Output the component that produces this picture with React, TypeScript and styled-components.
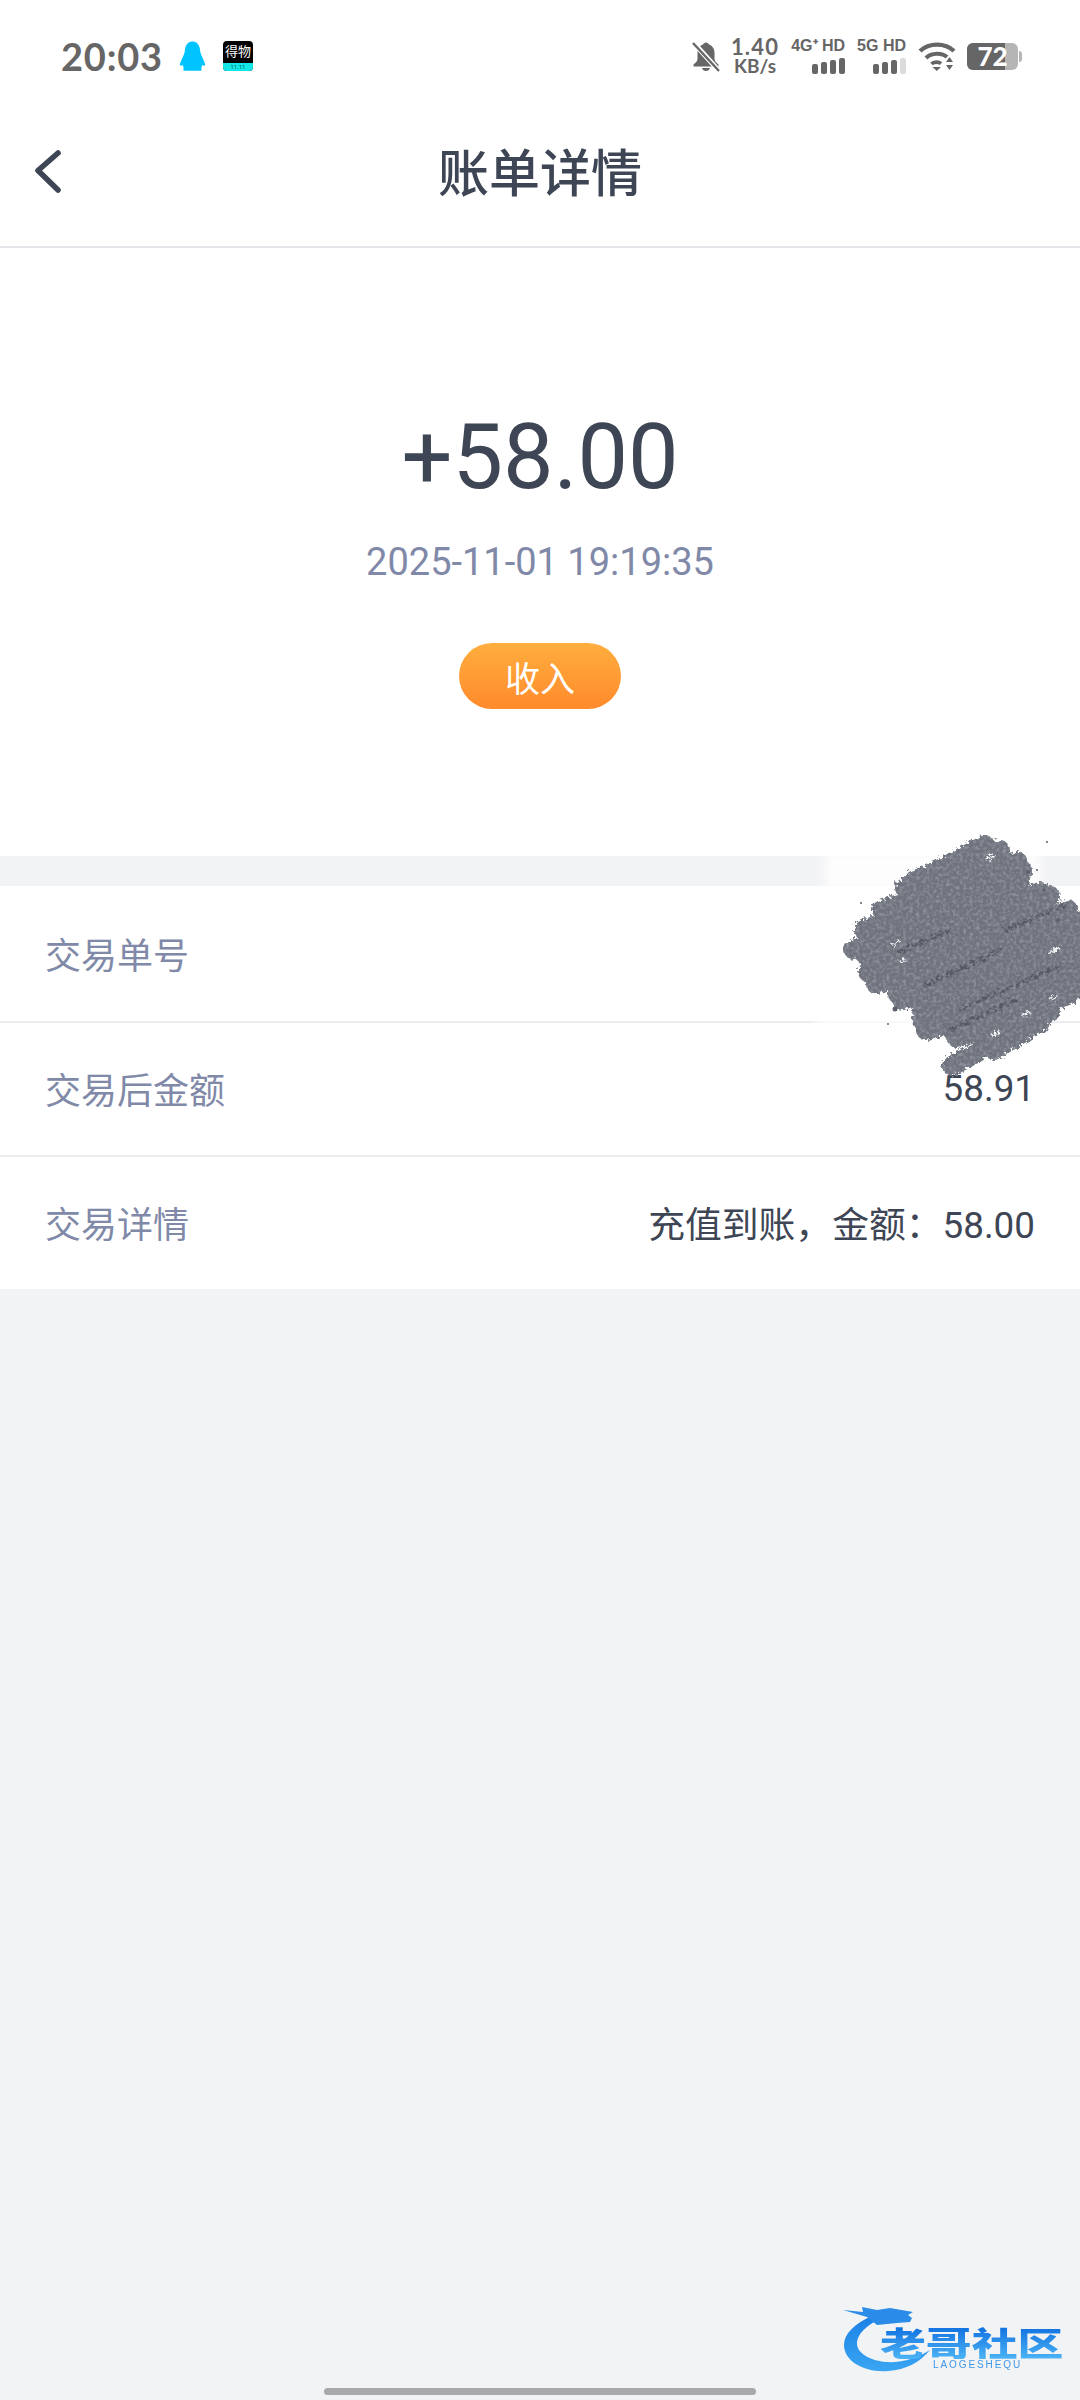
import React from 'react';
import styled, { createGlobalStyle } from 'styled-components';

const GlobalStyle = createGlobalStyle`
  html, body {
    margin: 0;
    padding: 0;
    background: #f2f3f5;
  }
  * {
    box-sizing: border-box;
  }
`;

const Page = styled.div`
  position: relative;
  width: 1080px;
  height: 2400px;
  overflow: hidden;
  background: #f2f3f5;
  font-family: Roboto, "Noto Sans CJK SC", sans-serif;
`;

const StatusBar = styled.div`
  display: flex;
  align-items: center;
  justify-content: space-between;
  height: 112px;
  padding: 0 58px 0 61px;
  background: #fff;
  color: #666;
`;

const StatusLeft = styled.div`
  display: flex;
  align-items: center;
`;

const Time = styled.span`
  font-family: Lato, sans-serif;
  font-size: 38px;
  font-weight: 700;
  letter-spacing: 0.8px;
  margin-right: 16px;
`;

const DewuIcon = styled.div`
  display: flex;
  flex-direction: column;
  align-items: center;
  width: 30px;
  height: 30px;
  margin-left: 17px;
  border-radius: 4px;
  overflow: hidden;
  background: #000;
`;

const DewuName = styled.span`
  height: 22px;
  font-size: 13px;
  line-height: 22px;
  color: #fff;
  white-space: nowrap;
`;

const DewuStrip = styled.span`
  align-self: stretch;
  height: 8px;
  font-size: 6px;
  line-height: 8px;
  text-align: center;
  background: #13e4e6;
  color: #066;
`;

const StatusRight = styled.div`
  display: flex;
  align-items: center;
`;

const Speed = styled.div`
  display: flex;
  flex-direction: column;
  align-items: center;
  margin: 0 12px 0 11px;
  font-family: Lato, sans-serif;
  font-weight: 700;
`;

const SpeedValue = styled.div`
  font-size: 22px;
  line-height: 20px;
  letter-spacing: 1.2px;
`;

const SpeedUnit = styled.div`
  font-size: 19px;
  line-height: 18px;
`;

const SimBlock = styled.div`
  display: flex;
  flex-direction: column;
  align-items: flex-end;
  margin-right: 12px;
`;

const SimLabel = styled.span`
  font-family: "Liberation Sans", sans-serif;
  font-size: 16px;
  font-weight: 700;
  line-height: 16px;
  white-space: nowrap;
`;

const Bars = styled.div`
  display: flex;
  align-items: flex-end;
  gap: 3px;
  height: 17px;
  margin-top: 3px;
`;

const Bar = styled.span<{ $h: number; $off?: boolean }>`
  width: 6px;
  height: ${p => p.$h}px;
  border-radius: 2px;
  background: ${p => (p.$off ? '#dcdcdc' : '#666')};
`;

const Battery = styled.div`
  display: flex;
  align-items: center;
  margin-left: 11px;
`;

const BatteryBody = styled.div`
  position: relative;
  width: 51px;
  height: 27px;
  border-radius: 6px;
  background: #b5b5b5;
  color: #fff;
  font-family: Lato, sans-serif;
  font-size: 26px;
  font-weight: 900;
  line-height: 27px;
  text-align: center;
`;

const BatteryFill = styled.div`
  position: absolute;
  inset: 0 auto 0 0;
  width: 38px;
  border-radius: 6px 0 0 6px;
  background: #666;
`;

const BatteryText = styled.span`
  position: relative;
`;

const BatteryCap = styled.span`
  width: 3px;
  height: 11px;
  margin-left: 1px;
  border-radius: 0 3px 3px 0;
  background: #b5b5b5;
`;

const NavBar = styled.div`
  position: relative;
  display: flex;
  align-items: center;
  justify-content: center;
  height: 136px;
  padding-bottom: 18px;
  background: #fff;
  border-bottom: 2px solid #e4e6ea;
`;

const BackButton = styled.div`
  position: absolute;
  left: 34px;
  top: 36px;
  display: flex;
`;

const Title = styled.h1`
  margin: 0;
  font-size: 51px;
  font-weight: 500;
  color: #3e4554;
`;

const Hero = styled.div`
  display: flex;
  flex-direction: column;
  align-items: center;
  height: 608px;
  padding-top: 156px;
  background: #fff;
`;

const Amount = styled.div`
  font-size: 90px;
  line-height: 108px;
  color: #3e4554;
`;

const DateText = styled.div`
  margin-top: 29px;
  font-size: 38px;
  line-height: 42px;
  color: #8089a8;
`;

const TypePill = styled.div`
  display: flex;
  align-items: center;
  justify-content: center;
  width: 162px;
  height: 66px;
  margin-top: 60px;
  border-radius: 33px;
  background: linear-gradient(180deg, #ffae3e 0%, #ff8a2b 100%);
  color: #fff;
  font-size: 35px;
`;

const DetailList = styled.div`
  margin-top: 30px;
  background: #fff;
`;

const Row = styled.div`
  display: flex;
  align-items: center;
  justify-content: space-between;
  height: 134px;
  padding: 0 45px 2px;
  font-size: 36px;
  &:first-child {
    height: 135px;
  }
  & + & {
    border-top: 2px solid #ebecef;
  }
`;

const RowLabel = styled.span`
  color: #8089a8;
`;

const RowValue = styled.span`
  font-size: 36.8px;
  color: #3e4554;
`;

const Scribble = styled.svg`
  position: absolute;
  left: 800px;
  top: 820px;
`;

const Watermark = styled.div`
  position: absolute;
  left: 840px;
  top: 2300px;
  width: 230px;
  height: 78px;
  filter: blur(0.7px);
`;

const DragonMark = styled.svg`
  position: absolute;
  left: 0;
  top: 0;
`;

const WatermarkName = styled.div`
  position: absolute;
  left: 40px;
  top: 26px;
  font-family: "Noto Sans CJK SC", sans-serif;
  font-size: 33px;
  font-weight: 900;
  line-height: 33px;
  white-space: nowrap;
  transform: scaleX(1.39);
  transform-origin: top left;
  background: linear-gradient(180deg, #0f6fe0 0%, #4cb4f5 100%);
  -webkit-background-clip: text;
  background-clip: text;
  color: transparent;
`;

const WatermarkSub = styled.div`
  position: absolute;
  left: 93px;
  top: 60px;
  font-family: "Liberation Sans", sans-serif;
  font-size: 10px;
  line-height: 10px;
  letter-spacing: 1.9px;
  color: #3f97e8;
`;

const HomeBar = styled.div`
  position: absolute;
  left: 324px;
  bottom: 5px;
  width: 432px;
  height: 7px;
  border-radius: 4px;
  background: #a9a9ab;
`;

const QQIcon = () => (
  <svg width="27" height="30" viewBox="0 0 27 30">
    <path
      d="M13.5 0.5C7.5 0.5 6 6 5.7 11 4.6 15 1.5 20 0.8 23.5 0.6 25 2.5 25 4 24 4 25.5 4.5 27 5 27.5 3.5 28 4 29.7 6 29.7H21C23 29.7 23.5 28 22 27.5 22.5 27 23 25.5 23 24 24.5 25 26.4 25 26.2 23.5 25.5 20 22.4 15 21.3 11 21 6 19.5 0.5 13.5 0.5Z"
      fill="#00c4ff"
    />
  </svg>
);

const BellOffIcon = () => (
  <svg width="28" height="31" viewBox="0 0 28 31">
    <path
      d="M14 1.5C12.5 1.5 11.5 2.5 11 3.6 7.5 4.8 5.5 8 5.5 12V18C5.5 20 3.5 22 1.5 23.6V25.5H26.5V23.6C24.5 22 22.5 20 22.5 18V12C22.5 8 20.5 4.8 17 3.6 16.5 2.5 15.5 1.5 14 1.5ZM10 27H18C17.5 29 16 30 14 30S10.5 29 10 27Z"
      fill="#666"
    />
    <path d="M1 1L27 30" stroke="#fff" strokeWidth="5" />
    <path d="M1 2L27 30" stroke="#666" strokeWidth="2.4" />
  </svg>
);

const WifiIcon = () => (
  <svg width="38" height="30" viewBox="0 0 38 30">
    <path d="M2 10C11 1.5 27 1.5 36 10" fill="none" stroke="#666" strokeWidth="4.4" />
    <path d="M8 17C13.5 11.5 24 11.5 29 16" fill="none" stroke="#666" strokeWidth="4.2" />
    <path d="M13.5 23C16 20.5 20.5 20.5 23 22.6" fill="none" stroke="#666" strokeWidth="3.8" />
    <path d="M14.5 26H23L18.8 30Z" fill="#666" />
    <path d="M28 21L31.5 16 35 21Z" fill="#666" />
    <path d="M28 24H35L31.5 29Z" fill="#666" />
  </svg>
);

const BackIcon = () => (
  <svg width="30" height="50" viewBox="0 0 30 50">
    <path
      d="M24 5L4 22.5 24 42"
      fill="none"
      stroke="#3e4554"
      strokeWidth="5.6"
      strokeLinecap="round"
      strokeLinejoin="round"
    />
  </svg>
);

// pen strokes of the scribble that hides the order number, in page coordinates
const scribbleStrokes = [
  [905, 888, 985, 845],
  [915, 880, 1000, 850],
  [882, 910, 1018, 862],
  [864, 930, 1022, 870],
  [854, 950, 1020, 880],
  [868, 958, 1040, 892],
  [868, 972, 1050, 896],
  [876, 984, 1068, 910],
  [898, 994, 1085, 920],
  [902, 1000, 1085, 934],
  [922, 1010, 1085, 950],
  [922, 1020, 1085, 964],
  [926, 1030, 1085, 976],
  [952, 1030, 1085, 985],
  [957, 1038, 1068, 995],
  [985, 1042, 1050, 1012],
  [994, 1050, 1040, 1022],
  [952, 1066, 1010, 1034],
];

const darkStreaks = [
  [900, 952, 950, 930],
  [960, 1010, 1060, 965],
  [925, 985, 1000, 950],
  [950, 1030, 1015, 1000],
  [1005, 930, 1065, 905],
];

const scribbleGaps = [
  [892, 945, 900, 941],
  [900, 962, 905, 959],
  [1048, 953, 1060, 948],
  [1050, 1000, 1058, 996],
  [1022, 1016, 1030, 1012],
  [992, 1036, 1000, 1031],
  [985, 860, 995, 855],
];

const scribbleDots = [
  [1028, 872, 2],
  [1044, 890, 1.5],
  [1058, 920, 2],
  [1047, 842, 1],
  [895, 1009, 2.5],
  [888, 1024, 1],
  [1037, 870, 1],
  [861, 903, 1],
];

const ScribbleOverlay = () => (
  <Scribble width="280" height="260" viewBox="800 820 280 260">
    <defs>
      <filter id="rough" x="-5%" y="-5%" width="110%" height="110%">
        <feTurbulence type="fractalNoise" baseFrequency="0.3" numOctaves="2" seed="4" result="n" />
        <feDisplacementMap in="SourceGraphic" in2="n" scale="8" result="d" />
        <feColorMatrix
          in="n"
          type="matrix"
          values="0 0 0 0 0.3  0 0 0 0 0.32  0 0 0 0 0.37  2 0 0 0 -0.85"
          result="speck"
        />
        <feComposite in="speck" in2="d" operator="in" result="s" />
        <feMerge>
          <feMergeNode in="d" />
          <feMergeNode in="s" />
        </feMerge>
      </filter>
      <filter id="fuzz">
        <feGaussianBlur stdDeviation="5" />
      </filter>
    </defs>
    <rect x="825" y="852" width="215" height="38" fill="#fff" opacity="0.85" filter="url(#fuzz)" />
    <rect x="815" y="1016" width="110" height="10" fill="#fff" filter="url(#fuzz)" />
    <g filter="url(#rough)">
      {scribbleStrokes.map(([x1, y1, x2, y2], i) => (
        <line key={i} x1={x1} y1={y1} x2={x2} y2={y2} stroke="#6f737e" strokeWidth="20" strokeLinecap="round" />
      ))}
      {darkStreaks.map(([x1, y1, x2, y2], i) => (
        <line key={i} x1={x1} y1={y1} x2={x2} y2={y2} stroke="#555964" strokeWidth="4" strokeLinecap="round" />
      ))}
      {scribbleGaps.map(([x1, y1, x2, y2], i) => (
        <line key={i} x1={x1} y1={y1} x2={x2} y2={y2} stroke="#fff" strokeWidth="2.5" />
      ))}
    </g>
    {scribbleDots.map(([cx, cy, r], i) => (
      <circle key={i} cx={cx} cy={cy} r={r} fill="#5d616d" />
    ))}
  </Scribble>
);

const DragonLogo = () => (
  <DragonMark width="120" height="78" viewBox="0 0 120 78">
    <defs>
      <linearGradient id="dragonBody" x1="0" y1="0" x2="0" y2="1">
        <stop offset="0" stopColor="#1a80e6" />
        <stop offset="1" stopColor="#3aa6f2" />
      </linearGradient>
    </defs>
    <path
      d="M32 16C14 24 4 34 4 45 4 62 26 73 48 71 66 70 80 62 90 50 78 58 62 63 46 62 28 60 16 52 17 42 18 34 26 26 38 20Z"
      fill="url(#dragonBody)"
    />
    <path
      d="M3 10L23 12 22 7 37 10 50 8 73 12 68 15 72 18 70 22 57 23 37 25 27 17Z"
      fill="#2a8ce8"
    />
  </DragonMark>
);

export default function App() {
  return (
    <Page>
      <GlobalStyle />
      <StatusBar>
        <StatusLeft>
          <Time>20:03</Time>
          <QQIcon />
          <DewuIcon>
            <DewuName>得物</DewuName>
            <DewuStrip>11.11</DewuStrip>
          </DewuIcon>
        </StatusLeft>
        <StatusRight>
          <BellOffIcon />
          <Speed>
            <SpeedValue>1.40</SpeedValue>
            <SpeedUnit>KB/s</SpeedUnit>
          </Speed>
          <SimBlock>
            <SimLabel>4G⁺ HD</SimLabel>
            <Bars>
              <Bar $h={10} />
              <Bar $h={12} />
              <Bar $h={14} />
              <Bar $h={16} />
            </Bars>
          </SimBlock>
          <SimBlock>
            <SimLabel>5G HD</SimLabel>
            <Bars>
              <Bar $h={10} />
              <Bar $h={12} />
              <Bar $h={14} />
              <Bar $h={16} $off />
            </Bars>
          </SimBlock>
          <WifiIcon />
          <Battery>
            <BatteryBody>
              <BatteryFill />
              <BatteryText>72</BatteryText>
            </BatteryBody>
            <BatteryCap />
          </Battery>
        </StatusRight>
      </StatusBar>

      <NavBar>
        <BackButton>
          <BackIcon />
        </BackButton>
        <Title>账单详情</Title>
      </NavBar>

      <Hero>
        <Amount>+58.00</Amount>
        <DateText>2025-11-01 19:19:35</DateText>
        <TypePill>收入</TypePill>
      </Hero>

      <DetailList>
        <Row>
          <RowLabel>交易单号</RowLabel>
        </Row>
        <Row>
          <RowLabel>交易后金额</RowLabel>
          <RowValue>58.91</RowValue>
        </Row>
        <Row>
          <RowLabel>交易详情</RowLabel>
          <RowValue>充值到账，金额：58.00</RowValue>
        </Row>
      </DetailList>

      <ScribbleOverlay />

      <Watermark>
        <DragonLogo />
        <WatermarkName>老哥社区</WatermarkName>
        <WatermarkSub>LAOGESHEQU</WatermarkSub>
      </Watermark>
      <HomeBar />
    </Page>
  );
}
